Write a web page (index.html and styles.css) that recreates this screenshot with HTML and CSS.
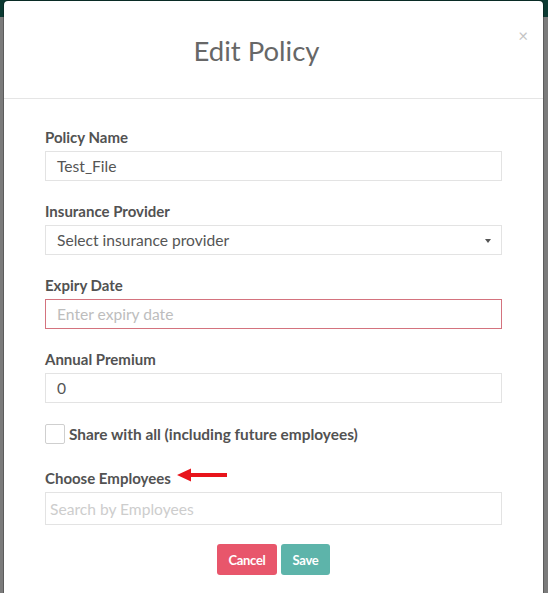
FILE: index.html
```html
<!DOCTYPE html>
<html>
<head>
<meta charset="utf-8">
<link rel="stylesheet" href="styles.css">
</head>
<body>
<div class="page">
  <div class="topbar"></div>
</div>
<div class="modal">
  <div class="modal-header">
    <h2 class="modal-title">Edit Policy</h2>
    <span class="close">×</span>
  </div>
  <div class="modal-body">
    <div class="field">
      <label class="label">Policy Name</label>
      <div class="input">Test_File</div>
    </div>
    <div class="field">
      <label class="label">Insurance Provider</label>
      <div class="input select">Select insurance provider<span class="caret"></span></div>
    </div>
    <div class="field">
      <label class="label">Expiry Date</label>
      <div class="input error placeholder">Enter expiry date</div>
    </div>
    <div class="field">
      <label class="label">Annual Premium</label>
      <div class="input">0</div>
    </div>
    <div class="check-row">
      <span class="checkbox"></span>
      <span class="check-label">Share with all (including future employees)</span>
    </div>
    <div class="field employees">
      <label class="label">Choose Employees
        <svg class="arrow" width="50" height="14" viewBox="0 0 50 14"><path d="M0 7 L14 0.5 L14 5 L50 5 L50 9 L14 9 L14 13.5 Z" fill="#e8141b"/></svg>
      </label>
      <div class="input search placeholder">Search by Employees</div>
    </div>
    <div class="actions">
      <button class="btn cancel">Cancel</button>
      <button class="btn save">Save</button>
    </div>
  </div>
</div>
</body>
</html>
```
FILE: styles.css
```css
html, body {
  margin: 0;
  padding: 0;
}
body {
  background: #7b7b7b;
  font-family: Lato, "Open Sans", "Liberation Sans", sans-serif;
  height: 593px;
  overflow: hidden;
}
.page {
  height: 593px;
}
.topbar {
  height: 17px;
  background: #0c3a32;
}
.modal {
  position: absolute;
  top: 1px;
  left: 4px;
  width: 539px;
  height: 620px;
  background: #fff;
  border-radius: 4px;
  box-shadow: 0 0 0 1px rgba(0,0,0,0.25);
}
.modal-header {
  position: relative;
  height: 97px;
  border-bottom: 1px solid #e5e5e5;
  display: flex;
  align-items: center;
  justify-content: center;
}
.modal-title {
  margin: 0;
  font-weight: 400;
  font-size: 27.5px;
  color: #676767;
  padding-top: 1px;
  padding-right: 34px;
}
.close {
  position: absolute;
  right: 15px;
  top: 24px;
  font-size: 17px;
  color: #c4c4c4;
}
.modal-body {
  padding: 29px 41px 0 41px;
}
.field {
  margin-bottom: 21px;
}
.label {
  display: block;
  font-weight: 700;
  font-size: 15px;
  color: #525252;
  line-height: 18px;
  margin-bottom: 5px;
}
.input {
  box-sizing: border-box;
  height: 30px;
  border: 1px solid #e3e3e3;
  padding: 0 11px;
  font-size: 15.6px;
  color: #555;
  display: flex;
  align-items: center;
  position: relative;
}
.placeholder {
  color: #bdbdbd;
}
.error {
  border-color: #d4737e;
}
.caret {
  position: absolute;
  right: 10px;
  top: 13px;
  width: 0;
  height: 0;
  border-left: 3.5px solid transparent;
  border-right: 3.5px solid transparent;
  border-top: 4px solid #555;
}
.check-row {
  display: flex;
  align-items: center;
  gap: 4px;
  margin-top: 20px;
  margin-bottom: 25px;
}
.checkbox {
  box-sizing: border-box;
  width: 20px;
  height: 20px;
  border: 1px solid #cfcfcf;
  border-radius: 2px;
  background: #fff;
}
.check-label {
  font-weight: 700;
  font-size: 15.4px;
  color: #525252;
}
.employees .label {
  display: flex;
  align-items: center;
  gap: 6px;
}
.arrow {
  display: block;
  margin-top: -6px;
}
.search {
  height: 33px;
  padding-left: 4px;
  font-size: 15.6px;
  color: #cdcdcd;
}
.actions {
  display: flex;
  justify-content: center;
  gap: 4px;
  margin-top: -2px;
}
.btn {
  border: none;
  border-radius: 3px;
  height: 31px;
  color: #fff;
  font-family: "Liberation Sans Narrow", Lato, sans-serif;
  font-weight: 700;
  font-size: 13px;
  padding: 0 11px;
  letter-spacing: -0.3px;
}
.cancel {
  background: #e8566b;
  width: 60px;
}
.save {
  background: #5db4aa;
  width: 49px;
}
```
